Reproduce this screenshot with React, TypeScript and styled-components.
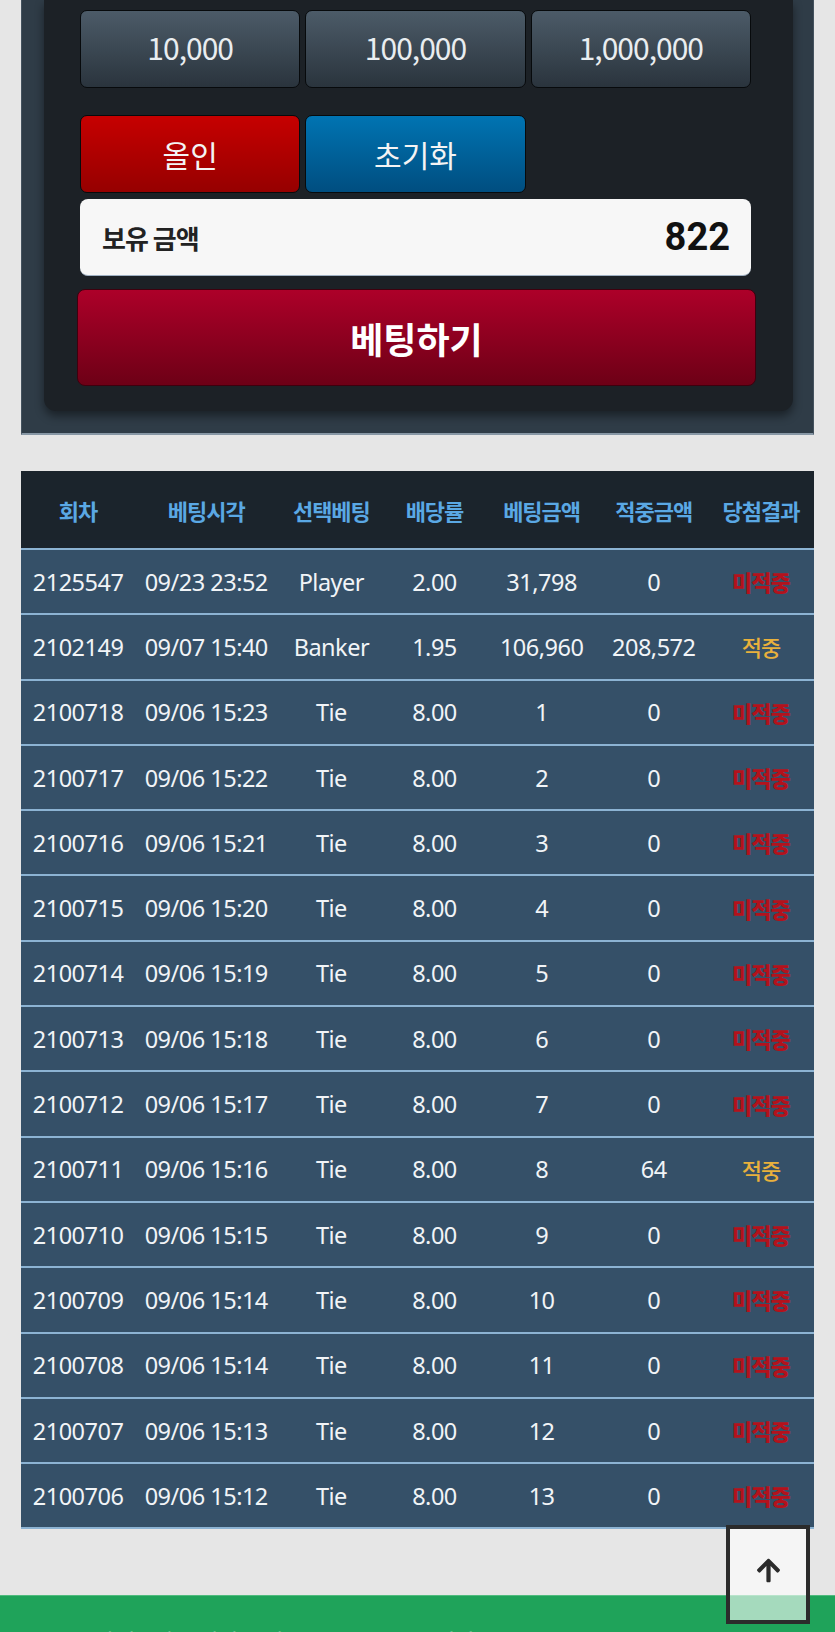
import React from 'react';
import styled, { createGlobalStyle } from "styled-components";
import { FaArrowUp } from "react-icons/fa";

type Bet = {
  round: string
  time: string
  pick: string
  odds: string
  amount: string
  win: string
  hit: boolean
}

const bets: Bet[] = [
  { round: "2125547", time: "09/23 23:52", pick: "Player", odds: "2.00", amount: "31,798", win: "0", hit: false },
  { round: "2102149", time: "09/07 15:40", pick: "Banker", odds: "1.95", amount: "106,960", win: "208,572", hit: true },
  { round: "2100718", time: "09/06 15:23", pick: "Tie", odds: "8.00", amount: "1", win: "0", hit: false },
  { round: "2100717", time: "09/06 15:22", pick: "Tie", odds: "8.00", amount: "2", win: "0", hit: false },
  { round: "2100716", time: "09/06 15:21", pick: "Tie", odds: "8.00", amount: "3", win: "0", hit: false },
  { round: "2100715", time: "09/06 15:20", pick: "Tie", odds: "8.00", amount: "4", win: "0", hit: false },
  { round: "2100714", time: "09/06 15:19", pick: "Tie", odds: "8.00", amount: "5", win: "0", hit: false },
  { round: "2100713", time: "09/06 15:18", pick: "Tie", odds: "8.00", amount: "6", win: "0", hit: false },
  { round: "2100712", time: "09/06 15:17", pick: "Tie", odds: "8.00", amount: "7", win: "0", hit: false },
  { round: "2100711", time: "09/06 15:16", pick: "Tie", odds: "8.00", amount: "8", win: "64", hit: true },
  { round: "2100710", time: "09/06 15:15", pick: "Tie", odds: "8.00", amount: "9", win: "0", hit: false },
  { round: "2100709", time: "09/06 15:14", pick: "Tie", odds: "8.00", amount: "10", win: "0", hit: false },
  { round: "2100708", time: "09/06 15:14", pick: "Tie", odds: "8.00", amount: "11", win: "0", hit: false },
  { round: "2100707", time: "09/06 15:13", pick: "Tie", odds: "8.00", amount: "12", win: "0", hit: false },
  { round: "2100706", time: "09/06 15:12", pick: "Tie", odds: "8.00", amount: "13", win: "0", hit: false },
]

const columns = ["회차", "베팅시각", "선택베팅", "배당률", "베팅금액", "적중금액", "당첨결과"]
const colWidths = [114, 142, 108, 98, 116, 108, 106]

export default function App() {
  return (
    <>
      <GlobalStyle/>
      <Page>
        <BetPanel>
          <Board>
            <ChipGrid>
              <ChipButton>10,000</ChipButton>
              <ChipButton>100,000</ChipButton>
              <ChipButton>1,000,000</ChipButton>
            </ChipGrid>
            <ActionGrid>
              <ActionButton $tone="red">올인</ActionButton>
              <ActionButton $tone="blue">초기화</ActionButton>
            </ActionGrid>
            <Balance>
              <BalanceLabel>보유 금액</BalanceLabel>
              <BalanceValue>822</BalanceValue>
            </Balance>
            <SubmitButton>베팅하기</SubmitButton>
          </Board>
        </BetPanel>

        <HistoryTable>
          <colgroup>
            {colWidths.map((w, i) => <col key={i} width={w}/>)}
          </colgroup>
          <thead>
            <tr>
              {columns.map(c => <HeadCell key={c}>{c}</HeadCell>)}
            </tr>
          </thead>
          <tbody>
            {bets.map(b => (
              <Row key={b.round}>
                <Cell>{b.round}</Cell>
                <Cell>{b.time}</Cell>
                <Cell>{b.pick}</Cell>
                <Cell>{b.odds}</Cell>
                <Cell>{b.amount}</Cell>
                <Cell>{b.win}</Cell>
                <Cell><Result $hit={b.hit}>{b.hit ? "적중" : "미적중"}</Result></Cell>
              </Row>
            ))}
          </tbody>
        </HistoryTable>
      </Page>

      <Footer>
        <FooterText>[ 안내 ] 베팅 내역은 최근 순으로 표시됩니다</FooterText>
      </Footer>

      <TopButton aria-label="맨 위로">
        <FaArrowUp size={27}/>
      </TopButton>
    </>
  );
}

const GlobalStyle = createGlobalStyle`
  html, body {
    margin: 0;
    padding: 0;
    background: #e6e6e6;
    font-family: "Noto Sans", "Noto Sans CJK KR", sans-serif;
  }
  * {
    box-sizing: border-box;
  }
`

const Page = styled.main`
  padding: 0 21px 66px 21px;
`

const BetPanel = styled.section`
  background: #2f3c47;
  border-left: 1px solid #44525e;
  border-right: 1px solid #44525e;
  border-bottom: 2px solid #8797a5;
  padding: 0 20px 22px 22px;
`

const Board = styled.div`
  background: #1c2126;
  border-radius: 0 0 12px 12px;
  box-shadow: 0 5px 10px rgba(0, 0, 0, 0.45);
  padding: 10px 42px 25px 36px;
  display: flex;
  flex-direction: column;
`

const ChipGrid = styled.div`
  display: grid;
  grid-template-columns: repeat(3, 1fr);
  gap: 5px;
`

const ChipButton = styled.button`
  height: 78px;
  border: 1px solid #070a0c;
  border-radius: 7px;
  background: linear-gradient(#4c5b68, #2a343d);
  color: #e9edf0;
  font-family: "Noto Sans CJK KR", sans-serif;
  font-size: 30px;
  letter-spacing: -1px;
  padding: 0 0 4px 0;
`

const ActionGrid = styled(ChipGrid)`
  margin-top: 27px;
`

const ActionButton = styled.button<{ $tone: "red" | "blue" }>`
  height: 78px;
  border: 1px solid #070a0c;
  border-radius: 7px;
  background: ${p => p.$tone === "red"
    ? "linear-gradient(#c60000, #960000)"
    : "linear-gradient(#0074b2, #004e80)"};
  color: #f4f4f4;
  font-family: "Noto Sans CJK KR", sans-serif;
  font-size: 30px;
  padding: 0;
`

const Balance = styled.div`
  margin-top: 6px;
  height: 77px;
  background: #f7f7f7;
  border-radius: 8px;
  border-bottom: 1px solid #9fb0c2;
  display: flex;
  align-items: center;
  justify-content: space-between;
  padding: 0 21px 0 22px;
`

const BalanceLabel = styled.span`
  font-family: "Noto Sans CJK KR", sans-serif;
  font-weight: 700;
  font-size: 26px;
  color: #222;
  letter-spacing: -1px;
`

const BalanceValue = styled.span`
  font-family: Roboto, "Noto Sans", sans-serif;
  font-weight: 700;
  font-size: 38px;
  color: #111;
`

const SubmitButton = styled.button`
  margin: 13px -5px 0 -3px;
  height: 97px;
  border: 1px solid #3e000e;
  border-radius: 8px;
  background: linear-gradient(#ad0029, #6d0016);
  color: #fff;
  font-family: "Noto Sans CJK KR", sans-serif;
  font-weight: 700;
  font-size: 36px;
  padding: 0;
`

const HistoryTable = styled.table`
  margin-top: 36px;
  width: 100%;
  table-layout: fixed;
  border-collapse: collapse;
  border-bottom: 2px solid #8cb3d3;
`

const HeadCell = styled.th`
  height: 78px;
  background: #1b242c;
  color: #5aa8e4;
  font-family: "Noto Sans CJK KR", sans-serif;
  font-weight: 700;
  font-size: 22px;
  letter-spacing: -1px;
  text-align: center;
  padding: 0;
`

const Row = styled.tr`
  height: 65.3px;
  background: #355068;
  border-top: 2px solid #8cb3d3;
`

const Cell = styled.td`
  padding: 0;
  text-align: center;
  color: #f1f4f7;
  font-size: 23.5px;
  white-space: nowrap;
  letter-spacing: -0.5px;
`

const Result = styled.span<{ $hit: boolean }>`
  font-family: "Noto Sans CJK KR", sans-serif;
  font-size: 22px;
  font-weight: ${p => p.$hit ? 500 : 900};
  letter-spacing: -1px;
  color: ${p => p.$hit ? "#e9b13c" : "#b3121c"};
`

const Footer = styled.footer`
  background: #1fa35a;
  border-top: 1px solid #4fbb7e;
  padding: 28px 0 30px 82px;
`

const FooterText = styled.p`
  margin: 0;
  color: #fff;
  font-family: "Noto Sans CJK KR", sans-serif;
  font-size: 22px;
  white-space: nowrap;
  overflow: hidden;
`

const TopButton = styled.button`
  position: fixed;
  right: 25px;
  bottom: 8px;
  width: 84px;
  height: 99px;
  border: 4px solid #2b2b2b;
  background: rgba(255, 255, 255, 0.6);
  color: #2b2b2b;
  display: flex;
  align-items: center;
  justify-content: center;
  padding: 0 0 8px 0;
`
